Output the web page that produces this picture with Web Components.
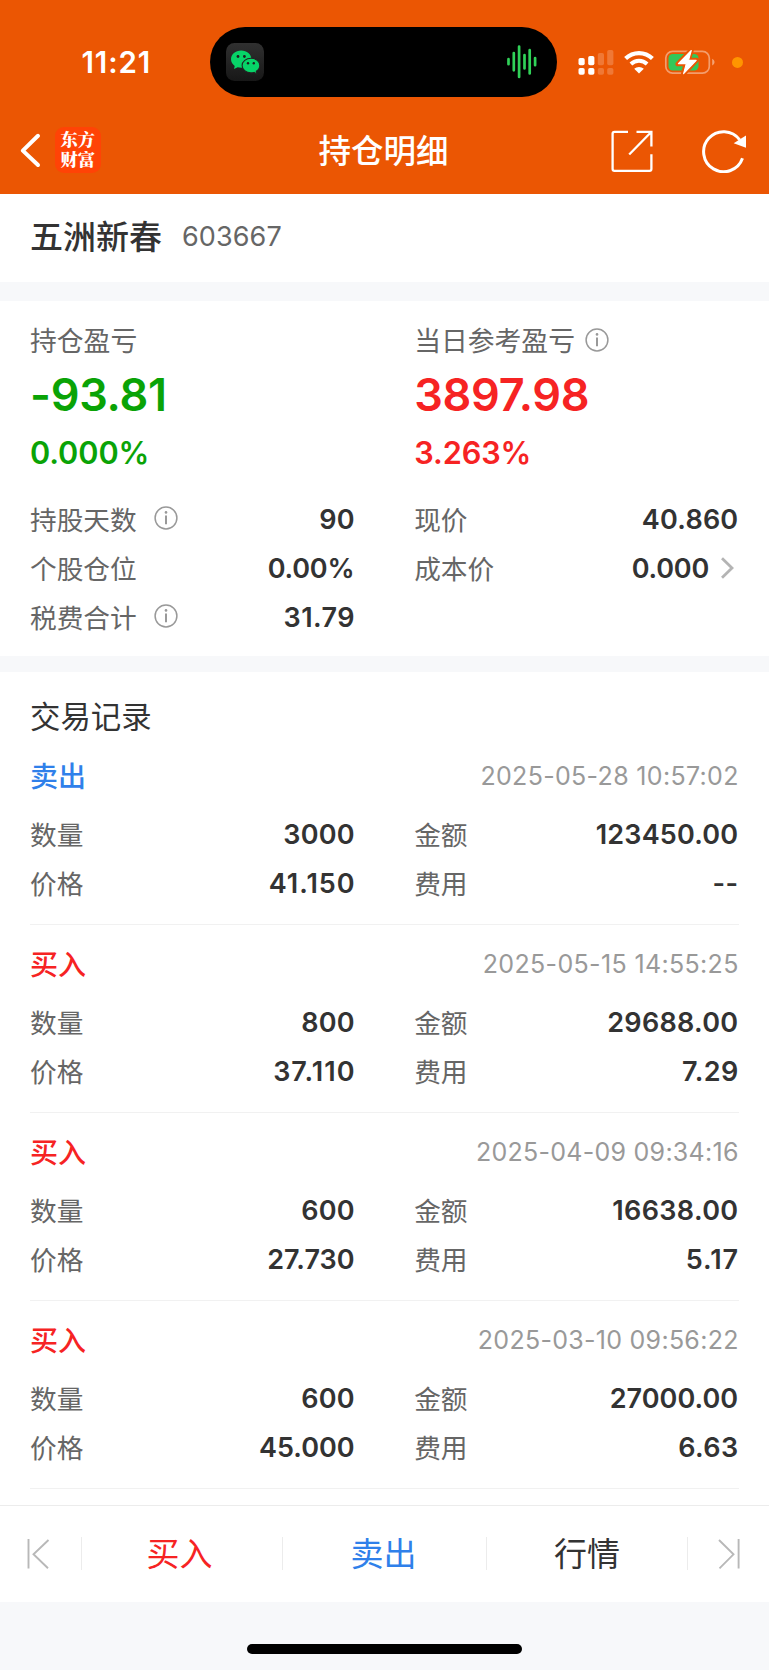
<!DOCTYPE html>
<html lang="zh-CN">
<head>
<meta charset="utf-8">
<title>持仓明细</title>
<style>
html,body{margin:0;background:#fff}
body{font-family:"Inter","Noto Sans CJK SC",sans-serif;color:#333}
</style>
</head>
<body>
<position-page></position-page>
<script>
const define=(name,html)=>customElements.define(name,class extends HTMLElement{
  connectedCallback(){
    if(this.shadowRoot)return;
    const t=document.createElement('template');
    t.innerHTML=typeof html==='function'?html(this):html;
    this.attachShadow({mode:'open'}).append(t.content.cloneNode(true));
  }
});

define('info-icon',`<style>:host{display:block;width:24px;height:24px}svg{display:block}</style>
<svg width="24" height="24" viewBox="0 0 24 24" fill="none" stroke="#999"><circle cx="12" cy="12" r="10.9" stroke-width="1.5"/><path d="M12 9.6V18.3" stroke-width="2"/><circle cx="12" cy="6.4" r="1.3" fill="#999" stroke="none"/></svg>`);

define('status-bar',`<style>
:host{display:grid;grid-template-columns:210px 347px 1fr;height:97px;padding-top:27px;box-sizing:border-box;color:#fff}
.time{font-size:29.5px;font-weight:600;line-height:71px;padding-left:81.500px;letter-spacing:.9px;height:70px}
.island{height:70px;border-radius:35px;background:#000;display:flex;align-items:center;justify-content:space-between;padding:0 20px 0 16px;box-sizing:border-box}
.right{display:block}
svg{display:block}
</style>
<div class="time">11:21</div>
<div class="island">
<svg width="38" height="38" viewBox="0 0 38 38"><defs><linearGradient id="g" x2="0" y2="1"><stop stop-color="#303030"/><stop offset="1" stop-color="#171717"/></linearGradient></defs><rect width="38" height="38" rx="8.5" fill="url(#g)"/>
<path d="M15.2 7.5C9.5 7.5 5 11.4 5 16.2c0 2.8 1.500 5.100 3.700 6.700L8 26l3.700-1.800c1.100.3 2.300.5 3.500.5 5.500 0 10.200-3.700 10.200-8.500S20.900 7.500 15.200 7.500Z" fill="#07d468"/>
<path d="M25 15.200c-4.900 0-8.900 3.200-8.900 7.300s4 7.400 8.900 7.400c1.100 0 2.100-.2 3-.5l2.900 1.500-.6-2.700c2.200-1.300 3.500-3.400 3.500-5.700 0-4.100-3.900-7.300-8.800-7.300Z" fill="#07d468" stroke="#222" stroke-width="1.100"/>
<circle cx="12" cy="13.500" r="1.400" fill="#1d1d1d"/><circle cx="18.400" cy="13.500" r="1.400" fill="#1d1d1d"/><circle cx="22" cy="20.300" r="1.200" fill="#1d1d1d"/><circle cx="27.800" cy="20.300" r="1.200" fill="#1d1d1d"/></svg>
<svg width="30" height="34" viewBox="0 0 30 34" stroke="#30d158" stroke-width="2.700" stroke-linecap="round"><path d="M1.500 14.200v5M6.800 8v17.300M12.100 1.500v30.500M17.500 10v13.500M22.700 5.200v23.300M28.100 13v7.200"/></svg>
</div>
<div class="right"><svg width="212" height="70" viewBox="557 27 212 70">
<g fill="#fff"><rect x="578.500" y="58" width="6.200" height="7.200" rx="1.800"/><rect x="588.200" y="56" width="6.200" height="9.200" rx="1.800"/><rect x="578.500" y="68" width="6.200" height="6.800" rx="1.800"/><rect x="588.200" y="68" width="6.200" height="6.800" rx="1.800"/></g>
<g fill="#fff" opacity=".2"><rect x="597.800" y="53" width="6.200" height="12.200" rx="1.800"/><rect x="607.200" y="50" width="6.200" height="15.200" rx="1.800"/><rect x="597.800" y="68" width="6.200" height="6.800" rx="1.800"/><rect x="607.200" y="68" width="6.200" height="6.800" rx="1.800"/></g>
<g fill="none" stroke="#fff" stroke-width="4.200"><path d="M625.600 58.600a19.200 19.200 0 0 1 26.800 0"/><path d="M630.900 64a11.700 11.700 0 0 1 16.200 0" stroke-width="3.900"/></g>
<path d="M634.200 68.800a7 7 0 0 1 9.600 0L639 73.600Z" fill="#fff"/>
<rect x="665.800" y="51.300" width="43.500" height="21.900" rx="6.800" fill="none" stroke="#fff" stroke-opacity=".42" stroke-width="1.700"/>
<path d="M712.200 58.800v6.800c3.100-1.700 3.100-5.100 0-6.800Z" fill="#fff" opacity=".45"/>
<rect x="668.500" y="54" width="30" height="16.500" rx="4.200" fill="#34c759"/>
<path d="M691.800 49.300 677.600 64.100h8.200l-2.800 10.500 13.800-14.700h-8.100Z" fill="#fff" stroke="#eb5603" stroke-width="4.500" stroke-linejoin="round"/>
<path d="M691.300 50.500 678.400 63.600h7.900l-2.700 10 12.600-13.200h-7.700Z" fill="#fff" stroke="#fff" stroke-width="1.100" stroke-linejoin="round"/>
<circle cx="737.500" cy="62.400" r="5.500" fill="#ff9500"/>
</svg></div>`);

define('nav-bar',`<style>
:host{display:grid;grid-template-columns:55px 46px 112px 341px 2px 213px;align-items:center;height:97px;padding:9px 0 0;box-sizing:border-box;color:#fff}
.logo{width:46px;height:46px;border-radius:9px;background:#ff4306;display:grid;place-items:center}
.logo span{display:block;width:35px;font:900 17.300px/19.600px "Noto Serif CJK SC","Noto Sans CJK SC",sans-serif;word-break:break-all;margin-top:-2px}
h1{margin:-3px 0 0;font:500 32.500px/46px "Noto Sans CJK SC",sans-serif;text-align:center}
svg{display:block}
</style>
<svg width="55" height="46" viewBox="0 127 55 46" fill="none" stroke="#fff" stroke-width="4" stroke-linecap="round" stroke-linejoin="round"><path d="M38 135.800 22.800 150.600 38 165"/></svg>
<div class="logo"><span>东方财富</span></div><i></i>
<h1>持仓明细</h1><i></i>
<svg width="213" height="46" viewBox="556 127 213 46" fill="none" stroke="#fff" stroke-width="2.300">
<path d="M628 131.900H614.500q-1.900 0-1.900 1.900V169q0 1.900 1.900 1.900h35q1.900 0 1.900-1.900V154.300M636.500 131.900H651.400V146.500M650.500 132.800 629.200 154.500"/>
<path d="M742.500 158.300a20 20 0 1 1-2.800-18.500" stroke-width="3"/><path d="M746 135.500v12.300l-12.300-4.500Z" fill="#fff" stroke="none"/></svg>`);

define('stock-title',`<style>
:host{display:flex;align-items:center;height:88px;padding:0 30px;box-sizing:border-box;gap:20px}
b{font:500 33px/44px "Noto Sans CJK SC",sans-serif;color:#333;margin-top:-6px}
span{font-size:27px;line-height:44px;color:#666;letter-spacing:.1px;margin-top:-1px}
</style><b><slot name="name"></slot></b><span><slot></slot></span>`);

/* Label on the left, value on the right; an optional info icon or chevron.
   "track" is the letter-spacing of the value in pixels. */
define('data-row',el=>`<style>
:host{display:flex;align-items:center;height:49px;white-space:nowrap}
.l{font:400 26.700px/47px "Noto Sans CJK SC",sans-serif;color:#666;height:49px}
info-icon{margin-left:17px;margin-top:-2px}
.v{margin-left:auto;font-size:27px;font-weight:600;line-height:49px;color:#333;letter-spacing:${el.getAttribute('track')||0}px;margin-right:${-(el.getAttribute('track')||0)}px}
svg{display:block;margin:0 4px 0 12px}
</style><span class="l">${el.getAttribute('label')}</span>${el.hasAttribute('info')?'<info-icon></info-icon>':''}
<span class="v"><slot></slot></span>${el.hasAttribute('link')?'<svg width="13" height="22" viewBox="0 0 13 22" fill="none" stroke="#b4b4b4" stroke-width="2.800"><path d="M1 1.200 11 11 1 20.800"/></svg>':''}`);

define('profit-figure',el=>`<style>
:host{display:block;color:${el.getAttribute('tone')}}
.t{display:flex;align-items:center;font:400 26.800px/40px "Noto Sans CJK SC",sans-serif;color:#666;height:40px}
info-icon{margin-left:10px}
.n{font-size:45px;font-weight:600;line-height:60px;margin-top:5px;letter-spacing:-.27px}
.p{font-size:30.700px;font-weight:600;letter-spacing:-.1px;line-height:40px;margin-top:8px}
</style><div class="t">${el.getAttribute('label')}${el.hasAttribute('info')?'<info-icon></info-icon>':''}</div>
<div class="n">${el.getAttribute('amount')}</div><div class="p"><slot></slot></div>`);

define('two-col',`<style>:host{display:grid;grid-template-columns:324.600px 324px;column-gap:59.600px}</style><slot></slot>`);

define('position-summary',`<style>
:host{display:block;height:355px;padding:19px 30px 0;box-sizing:border-box}
.rows{margin-top:22px}
</style>
<two-col><profit-figure label="持仓盈亏" amount="-93.81" tone="#0aa306">0.000%</profit-figure>
<profit-figure label="当日参考盈亏" amount="3897.98" tone="#f62323" info>3.263%</profit-figure></two-col>
<two-col class="rows">
<data-row label="持股天数" info track=".3">90</data-row><data-row label="现价" track=".2">40.860</data-row>
<data-row label="个股仓位" track="-.2">0.00%</data-row><data-row label="成本价" link track="-.2">0.000</data-row>
<data-row label="税费合计" info track=".45">31.79</data-row></two-col>`);

define('trade-record',el=>{
const a=k=>el.getAttribute(k),sell=a('side')==='sell',[q,m,p,f,d]=a('track').split(' ');
return `<style>
:host{display:block;height:188.100px;margin:0 30px;border-bottom:1px solid #f1f1f1;box-sizing:border-box;padding-top:14px}
.h{display:flex;justify-content:space-between;height:50px;margin-bottom:9px}
.s{font:500 28px/48px "Noto Sans CJK SC",sans-serif;color:${sell?'#2f80ea':'#f62323'}}
.d{font-size:25px;line-height:50px;color:#999;letter-spacing:${d}px;margin-right:${.6-d}px}
</style><div class="h"><span class="s">${sell?'卖出':'买入'}</span><span class="d">${a('time')}</span></div>
<two-col><data-row label="数量" track="${q}">${a('qty')}</data-row><data-row label="金额" track="${m}">${a('amount')}</data-row>
<data-row label="价格" track="${p}">${a('price')}</data-row><data-row label="费用" track="${f}">${a('fee')}</data-row></two-col>`});

define('trade-list',`<style>
:host{display:block;height:833px;overflow:hidden}
h2{font:400 30.400px/44px "Noto Sans CJK SC",sans-serif;color:#333;margin:0;padding:21px 30px 0;height:64.700px;box-sizing:border-box}
</style><h2>交易记录</h2>
<trade-record side="sell" time="2025-05-28 10:57:02" qty="3000" amount="123450.00" price="41.150" fee="--" track=".2 .2 1 .6 .32"></trade-record>
<trade-record side="buy" time="2025-05-15 14:55:25" qty="800" amount="29688.00" price="37.110" fee="7.29" track=".2 .3 1.05 .4 .35"></trade-record>
<trade-record side="buy" time="2025-04-09 09:34:16" qty="600" amount="16638.00" price="27.730" fee="5.17" track=".2 .38 .05 1 .27"></trade-record>
<trade-record side="buy" time="2025-03-10 09:56:22" qty="600" amount="27000.00" price="45.000" fee="6.63" track=".2 .05 0 .4 .28"></trade-record>`);

define('bottom-bar',`<style>
:host{display:grid;grid-template-columns:81px 201px 204px 201px 82px;align-items:center;height:97px;border-top:1px solid #ececec;box-sizing:border-box;font:400 33px/48px "Noto Sans CJK SC",sans-serif;text-align:center}
svg{display:block}
span{border-left:1px solid #ececec;height:33px;line-height:30px}
.end{border-left:1px solid #ececec;height:33px}
</style>
<svg width="81" height="34" viewBox="0 1537 81 34" fill="none" stroke="#b8b8b8" stroke-width="1.900"><path d="M28.500 1539v29.500M48.500 1540 33.500 1554.300 48 1568.300"/></svg>
<span style="color:#f62323;text-indent:-5px">买入</span><span style="color:#2f80ea;text-indent:-2px">卖出</span><span>行情</span>
<div class="end"><svg width="81" height="34" viewBox="688 1537 81 34" fill="none" stroke="#b8b8b8" stroke-width="1.900"><path d="M719 1540 733.500 1554.300 719.500 1568.300M738.600 1539v29.500"/></svg></div>`);

define('home-area',`<style>
:host{display:flex;justify-content:center;height:68px;padding:42px 1px 0 0;box-sizing:border-box;background:#f7f8fa}
i{width:275px;height:10px;border-radius:5px;background:#000}
</style><i></i>`);

define('position-page',`<style>
:host{display:block;width:769px;height:1670px;overflow:hidden;background:#fff}
header{background:#eb5603;height:193.700px}
.band{background:#f7f8fa;height:19.300px}.band.s{height:16px}
</style>
<header><status-bar></status-bar><nav-bar></nav-bar></header>
<stock-title><span slot="name">五洲新春</span>603667</stock-title>
<div class="band"></div>
<position-summary></position-summary>
<div class="band s"></div>
<trade-list></trade-list>
<bottom-bar></bottom-bar><home-area></home-area>`);
</script>
</body>
</html>
